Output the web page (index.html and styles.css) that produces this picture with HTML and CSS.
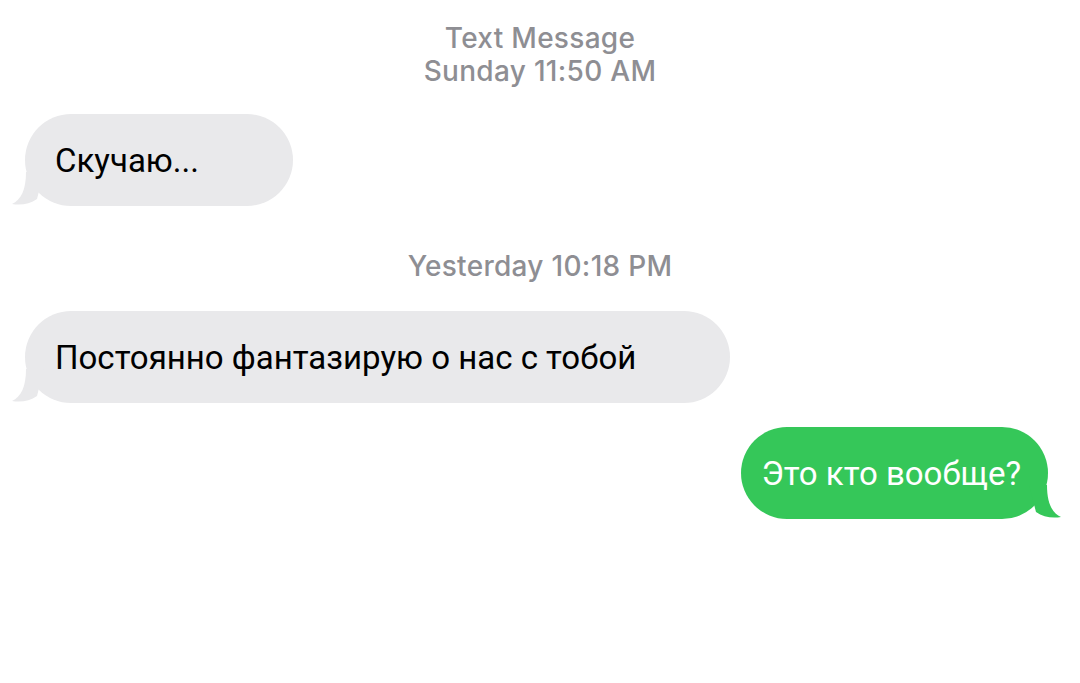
FILE: index.html
```html
<!DOCTYPE html>
<html lang="ru">
<head>
<meta charset="utf-8">
<link rel="stylesheet" href="styles.css">
</head>
<body>
<main class="thread">
  <div class="stamp stamp-top">
    <div class="stamp-title">Text Message</div>
    <div><b>Sunday</b> 11:50 AM</div>
  </div>
  <div class="row row-in first">
    <div class="bubble in">
      <span>Скучаю...</span>
      <svg class="tail tail-in" width="32" height="34" viewBox="0 0 32 34"><path d="M14 0 C14 18 9 28 0 32 C9 33.5 18 32 25 27 L32 0 Z"/></svg>
    </div>
  </div>
  <div class="stamp stamp-mid"><b>Yesterday</b> 10:18 PM</div>
  <div class="row row-in second">
    <div class="bubble in">
      <span>Постоянно фантазирую о нас с тобой</span>
      <svg class="tail tail-in" width="32" height="34" viewBox="0 0 32 34"><path d="M14 0 C14 18 9 28 0 32 C9 33.5 18 32 25 27 L32 0 Z"/></svg>
    </div>
  </div>
  <div class="row row-out">
    <div class="bubble out">
      <span>Это кто вообще?</span>
      <svg class="tail tail-out" width="32" height="34" viewBox="0 0 32 34"><path d="M18 0 C18 18 23 28 32 32 C23 33.5 14 32 7 27 L0 0 Z"/></svg>
    </div>
  </div>
</main>
</body>
</html>
```
FILE: styles.css
```css
html, body {
  margin: 0;
  padding: 0;
  background: #ffffff;
}
.thread {
  width: 1080px;
  height: 683px;
  display: flex;
  flex-direction: column;
  font-family: Roboto, "Noto Sans", sans-serif;
}
.stamp {
  text-align: center;
  color: #8e8e93;
  font-family: Inter, "Liberation Sans", sans-serif;
  font-size: 28px;
  font-weight: 500;
  line-height: 33px;
  letter-spacing: 0.3px;
}
.stamp b { font-weight: 500; }
.stamp-title { font-weight: 500; }
.stamp-top { margin-top: 22px; }
.stamp-mid { margin-top: 44px; }
.row { display: flex; }
.row-in { justify-content: flex-start; padding-left: 25px; }
.row-in.first { margin-top: 26px; }
.row-in.second { margin-top: 28px; }
.row-out { justify-content: flex-end; padding-right: 32px; margin-top: 24px; }
.bubble {
  position: relative;
  height: 92px;
  border-radius: 46px;
  display: flex;
  align-items: center;
  font-size: 33px;
  box-sizing: border-box;
}
.bubble span { position: relative; z-index: 1; }
.bubble.in { background: #e9e9eb; color: #000; padding: 0 94px 0 30px; }
.bubble.out { background: #35c759; color: #fff; padding: 0 27px 0 20px; }
.tail { position: absolute; bottom: 0; }
.tail-in { left: -13px; fill: #e9e9eb; }
.tail-out { right: -13px; fill: #35c759; }
```
